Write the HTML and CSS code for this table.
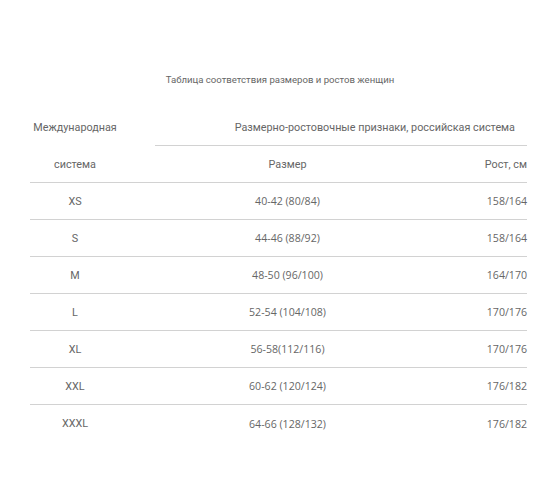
FILE: index.html
```html
<!DOCTYPE html>
<html lang="ru">
<head>
<meta charset="utf-8">
<link rel="stylesheet" href="styles.css">
</head>
<body>
<div class="page">
  <h1 class="title">Таблица соответствия размеров и ростов женщин</h1>
  <div class="table">
    <div class="head-row">
      <div class="c1">Международная</div>
      <div class="span">Размерно-ростовочные признаки, российская система</div>
    </div>
    <div class="row sub">
      <div class="c1">система</div>
      <div class="c2">Размер</div>
      <div class="c3">Рост, см</div>
    </div>
    <div class="row"><div class="c1">XS</div><div class="c2">40-42 (80/84)</div><div class="c3">158/164</div></div>
    <div class="row"><div class="c1">S</div><div class="c2">44-46 (88/92)</div><div class="c3">158/164</div></div>
    <div class="row"><div class="c1">M</div><div class="c2">48-50 (96/100)</div><div class="c3">164/170</div></div>
    <div class="row"><div class="c1">L</div><div class="c2">52-54 (104/108)</div><div class="c3">170/176</div></div>
    <div class="row"><div class="c1">XL</div><div class="c2">56-58(112/116)</div><div class="c3">170/176</div></div>
    <div class="row"><div class="c1">XXL</div><div class="c2">60-62 (120/124)</div><div class="c3">176/182</div></div>
    <div class="row last"><div class="c1">XXXL</div><div class="c2">64-66 (128/132)</div><div class="c3">176/182</div></div>
  </div>
</div>
</body>
</html>
```

FILE: styles.css
```css
* { box-sizing: border-box; }
html, body { margin: 0; padding: 0; background: #fff; }
body {
  font-family: Roboto, "Open Sans", sans-serif;
  font-size: 10.8px;
  color: #666;
  width: 560px;
  height: 504px;
  overflow: hidden;
}
.page {
  padding-top: 72px;
  padding-left: 30px;
  width: 527px;
}
.title {
  margin: 0;
  font-size: 9.6px;
  font-weight: 400;
  line-height: 16px;
  text-align: center;
  color: #666;
  width: 500px;
}
.table {
  margin-top: 15px;
  width: 497px;
}
.head-row {
  display: flex;
  height: 43px;
  align-items: stretch;
}
.head-row .c1 {
  width: 90px;
  text-align: center;
  line-height: 16px;
  padding-top: 17px;
}
.head-row .span {
  margin-left: 35px;
  flex: 1;
  border-bottom: 1px solid #d2d2d2;
  text-align: right;
  padding-right: 12px;
  padding-top: 17px;
  line-height: 16px;
}
.row {
  display: grid;
  grid-template-columns: 90px 35px 265px 1fr;
  height: 37px;
  align-items: center;
  border-bottom: 1px solid #d2d2d2;
}
.row.last { border-bottom: 0; }
.row .c1 { grid-column: 1; text-align: center; }
.row .c2 { grid-column: 3; text-align: center; }
.row .c3 { grid-column: 4; text-align: right; }
.row:not(.sub) .c2,
.row:not(.sub) .c3 { font-family: "Open Sans", Roboto, sans-serif; font-size: 10.6px; }
```
